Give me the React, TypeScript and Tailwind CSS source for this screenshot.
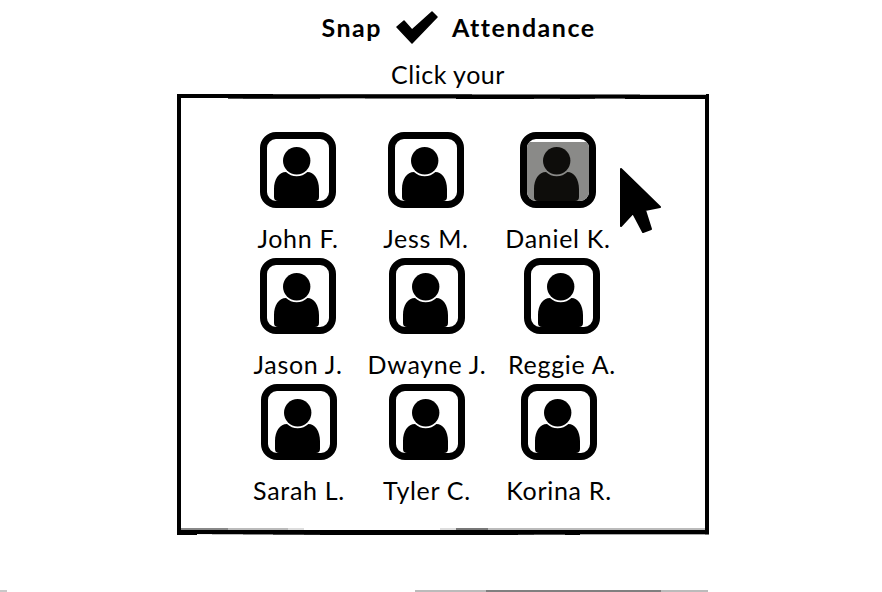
const font = "font-['Lato','Liberation_Sans',sans-serif]";

const people = [
  [
    { name: "John F.", cell: "w-[120px]" },
    { name: "Jess M.", cell: "w-[136px]" },
    { name: "Daniel K.", cell: "w-[128px]", selected: true },
  ],
  [
    { name: "Jason J.", cell: "w-[120px]" },
    { name: "Dwayne J.", cell: "w-[138px]" },
    { name: "Reggie A.", cell: "w-[132px]" },
  ],
  [
    { name: "Sarah L.", cell: "w-[122px]" },
    { name: "Tyler C.", cell: "w-[134px]" },
    { name: "Korina R.", cell: "w-[130px]" },
  ],
];

// hand-drawn look of the box edges: [width, colour] runs laid over the border
const topOuter: [number, string][] = [[96, "#000"], [199, "#333"], [168, "#777"], [66, "#ccc"]];
const topInner: [number, string][] = [
  [47, "#fff"], [15, "#555"], [77, "#333"], [20, "#888"], [25, "#aaa"], [75, "#777"], [16, "#888"],
  [78, "#000"], [26, "#333"], [20, "#000"], [15, "#222"], [30, "#666"], [80, "#000"],
];
const bottomInner: [number, string][] = [
  [47, "#888"], [60, "#bbb"], [16, "#ddd"], [136, "#fff"], [16, "#ddd"], [32, "#777"], [15, "#bbb"], [202, "#bbb"],
];
const bottomOuter: [number, string][] = [
  [20, "#000"], [15, "#eee"], [31, "#bbb"], [30, "#888"], [31, "#444"], [16, "#222"], [198, "#000"],
  [16, "#333"], [31, "#555"], [15, "#000"], [125, "#aaa"], [4, "#777"],
];

const Strip = ({ runs, className }: { runs: [number, string][]; className: string }) => (
  <div className={`absolute flex ${className}`}>
    {runs.map(([w, c], i) => (
      <div key={i} style={{ width: w, background: c }} />
    ))}
  </div>
);

const Avatar = ({ selected }: { selected?: boolean }) => {
  const ink = selected ? "#0e0d0b" : "#000";
  return (
    <div className="relative w-[76px] h-[76px] rounded-[16px] border-[7px] border-black bg-white overflow-hidden">
      {selected && <div className="absolute inset-x-0 top-[3px] bottom-0 bg-[#8a8a88]" />}
      <svg viewBox="0 0 62 62" className="absolute inset-0 w-[62px] h-[62px]">
        <circle cx="29.7" cy="21.7" r="13.7" fill={ink} />
        <path
          d="M19 33 A15.5 15.5 0 0 0 40.4 33 C47 33 52 40 52 50 L52 58 Q52 62 48 62 L11 62 Q7 62 7 58 L7 50 C7 40 12 33 19 33 Z"
          fill={ink}
        />
      </svg>
    </div>
  );
};

export default function App() {
  return (
    <div className={`w-[882px] h-[592px] bg-white text-black overflow-hidden flex flex-col ${font}`}>
      <div className="flex items-center justify-center gap-[13px] pl-[35px] pt-[10px] h-[46px]">
        <span className="text-[25px] font-bold tracking-[1.5px]">Snap</span>
        <svg viewBox="0 0 44 34" className="w-[44px] h-[34px]">
          <path
            d="M2 16 L9 10 L17 19 L37 1 L42 6 L17 32 Z"
            fill="#000"
            stroke="#000"
            strokeWidth="1.5"
            strokeLinejoin="round"
          />
        </svg>
        <span className="text-[25px] font-bold tracking-[1.5px]">Attendance</span>
      </div>
      <div className="h-[48px] pt-[13px] pl-[14px] text-center text-[25px] tracking-[0.5px] leading-[30px]">Click your</div>
      <div className="relative ml-[177px] w-[532px] h-[441px] border-[4px] border-b-[5px] border-black pt-[34px] pl-[57px] flex flex-col">
        <Strip runs={topOuter} className="-top-[4px] -left-[4px] h-[1px]" />
        <Strip runs={topInner} className="top-0 left-0 h-[1px]" />
        <Strip runs={bottomInner} className="bottom-0 left-0 h-[2px]" />
        <Strip runs={bottomOuter} className="-bottom-[5px] -left-[4px] h-[1px]" />
        {people.map((row, r) => (
          <div key={r} className="flex h-[126px]">
            {row.map((p) => (
              <div key={p.name} className={`${p.cell} flex flex-col items-center`}>
                <Avatar selected={p.selected} />
                <div className="mt-[15px] text-[25px] leading-[30px] tracking-[0.7px] whitespace-nowrap">{p.name}</div>
              </div>
            ))}
          </div>
        ))}
        <svg viewBox="0 0 44 68" className="absolute left-[438px] top-[69px] w-[44px] h-[68px]">
          <path
            d="M2 2 L41 40 L26 43 L32 62 L24 65 L14 46 L2 59 Z"
            fill="#000"
            stroke="#000"
            strokeWidth="2"
            strokeLinejoin="round"
          />
        </svg>
      </div>
      <div className="mt-[55px] h-[2px] flex">
        <div className="w-[7px] bg-[#c8c8c8]" />
        <div className="w-[408px]" />
        <div className="w-[71px] bg-[#bbbbbb]" />
        <div className="w-[175px] bg-[#808080]" />
        <div className="w-[47px] bg-[#bbbbbb]" />
      </div>
    </div>
  );
}
